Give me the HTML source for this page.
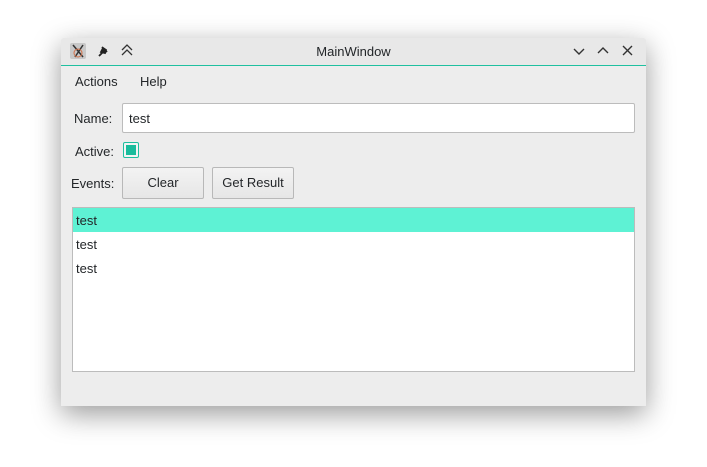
<!DOCTYPE html>
<html><head><style>
body{margin:0;width:707px;height:467px;background:#fff;position:relative;overflow:hidden;font-family:"Liberation Sans",sans-serif;font-size:13px;color:#232629}
.win{position:absolute;left:61px;top:38px;width:585px;height:368px;background:#ededed;box-shadow:0 8px 28px rgba(0,0,0,.4);border-radius:3px 3px 0 0}
.tb{position:absolute;left:0;top:0;width:585px;height:27px;background:#e8e8e8;border-bottom:1px solid #1fc0a0;border-radius:3px 3px 0 0}
.a{position:absolute;white-space:nowrap}
.btn{position:absolute;height:30px;top:129px;border:1px solid #b8b8b8;border-radius:2px;background:linear-gradient(#f3f3f3,#e6e6e6);text-align:center;line-height:30px;font-size:13px}
</style></head><body>
<div class="win">
<div class="tb">
 <div class="a" style="left:9px;top:5px;width:16px;height:16px;background:#c8c8c8;border-radius:2px"></div>
 <svg class="a" style="left:9px;top:5px" width="16" height="16"><path d="M3 2L13 14M13 2L5 14" stroke="#333" stroke-width="1.5" fill="none"/><circle cx="8" cy="10" r="4" stroke="#d0704a" fill="none"/></svg>
 <svg class="a" style="left:35px;top:6px" width="14" height="14"><path d="M3 12L7 8M6 3L11 8M7 4L5 8L9 9L10 6Z" stroke="#222" stroke-width="1.8" fill="#222"/></svg>
 <svg class="a" style="left:59px;top:5px" width="14" height="14"><path d="M2 7L7 2L12 7M2 12L7 7L12 12" stroke="#333" stroke-width="1.3" fill="none"/></svg>
 <div class="a" style="left:0;width:585px;text-align:center;top:6px">MainWindow</div>
 <svg class="a" style="left:511px;top:7px" width="14" height="14"><path d="M2 4L7 9L12 4" stroke="#333" stroke-width="1.4" fill="none"/></svg>
 <svg class="a" style="left:535px;top:5px" width="14" height="14"><path d="M2 10L7 5L12 10" stroke="#333" stroke-width="1.4" fill="none"/></svg>
 <svg class="a" style="left:560px;top:6px" width="14" height="14"><path d="M2 2L11 11M11 2L2 11" stroke="#333" stroke-width="1.4" fill="none"/></svg>
</div>
<div class="a" style="left:14px;top:36px">Actions</div>
<div class="a" style="left:79px;top:36px">Help</div>
<div class="a" style="left:13px;top:73px">Name:</div>
<div class="a" style="left:61px;top:65px;width:511px;height:28px;background:#fff;border:1px solid #bcbcbc;border-radius:2px"></div>
<div class="a" style="left:68px;top:73px">test</div>
<div class="a" style="left:14px;top:106px">Active:</div>
<div class="a" style="left:62px;top:104px;width:14px;height:14px;border:1px solid #1fbf9f;border-radius:2px;background:#f4f4f4"></div>
<div class="a" style="left:65px;top:107px;width:10px;height:10px;background:#1abc9c"></div>
<div class="a" style="left:10px;top:138px">Events:</div>
<div class="btn" style="left:61px;width:80px">Clear</div>
<div class="btn" style="left:151px;width:80px">Get Result</div>
<div class="a" style="left:11px;top:169px;width:561px;height:163px;background:#fff;border:1px solid #bcbcbc"></div>
<div class="a" style="left:12px;top:170px;width:561px;height:24px;background:#5ef2d4"></div>
<div class="a" style="left:15px;top:175px">test</div>
<div class="a" style="left:15px;top:199px">test</div>
<div class="a" style="left:15px;top:223px">test</div>
</div>
</body></html>
